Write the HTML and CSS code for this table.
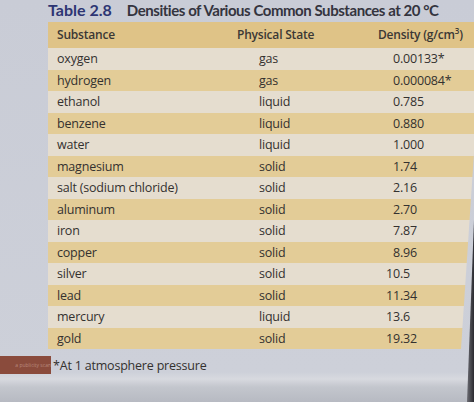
FILE: index.html
```html
<!DOCTYPE html>
<html>
<head>
<meta charset="utf-8">
<link rel="stylesheet" href="styles.css">
</head>
<body>
<div class="page">
  <h1 class="title"><span class="num">Table 2.8</span><span class="name">Densities of Various Common Substances at 20 °C</span></h1>
  <div class="tbl">
    <div class="row head"><div class="c1">Substance</div><div class="c2">Physical State</div><div class="c3">Density (g/cm<sup>3</sup>)</div></div>
    <div class="row"><div class="c1">oxygen</div><div class="c2">gas</div><div class="c3"><span class="i">0</span>.00133*</div></div>
    <div class="row"><div class="c1">hydrogen</div><div class="c2">gas</div><div class="c3"><span class="i">0</span>.000084*</div></div>
    <div class="row"><div class="c1">ethanol</div><div class="c2">liquid</div><div class="c3"><span class="i">0</span>.785</div></div>
    <div class="row"><div class="c1">benzene</div><div class="c2">liquid</div><div class="c3"><span class="i">0</span>.880</div></div>
    <div class="row"><div class="c1">water</div><div class="c2">liquid</div><div class="c3"><span class="i">1</span>.000</div></div>
    <div class="row"><div class="c1">magnesium</div><div class="c2">solid</div><div class="c3"><span class="i">1</span>.74</div></div>
    <div class="row"><div class="c1">salt (sodium chloride)</div><div class="c2">solid</div><div class="c3"><span class="i">2</span>.16</div></div>
    <div class="row"><div class="c1">aluminum</div><div class="c2">solid</div><div class="c3"><span class="i">2</span>.70</div></div>
    <div class="row"><div class="c1">iron</div><div class="c2">solid</div><div class="c3"><span class="i">7</span>.87</div></div>
    <div class="row"><div class="c1">copper</div><div class="c2">solid</div><div class="c3"><span class="i">8</span>.96</div></div>
    <div class="row"><div class="c1">silver</div><div class="c2">solid</div><div class="c3"><span class="i">10</span>.5</div></div>
    <div class="row"><div class="c1">lead</div><div class="c2">solid</div><div class="c3"><span class="i">11</span>.34</div></div>
    <div class="row"><div class="c1">mercury</div><div class="c2">liquid</div><div class="c3"><span class="i">13</span>.6</div></div>
    <div class="row"><div class="c1">gold</div><div class="c2">solid</div><div class="c3"><span class="i">19</span>.32</div></div>
  </div>
  <div class="foot">
    <span class="tag">a publicity scan</span>
    <span class="note">*At 1 atmosphere pressure</span>
  </div>
</div>
</body>
</html>
```
FILE: styles.css
```css
html, body {
  margin: 0;
  padding: 0;
}
body {
  position: relative;
  width: 474px;
  height: 402px;
  overflow: hidden;
  font-family: "Open Sans", "Noto Sans", sans-serif;
  color: #34312f;
  background: linear-gradient(to bottom, #c9ccd6 0, #cdd0d9 372px, #d7d9df 379px, #c3c6cd 387px, #b7bac2 402px);
}
body::after {
  content: "";
  position: absolute;
  top: 0;
  right: 0;
  width: 12px;
  height: 402px;
  background: linear-gradient(to right, #9a9ba2 0, #2a2a30 100%);
  clip-path: polygon(100% 220px, 100% 100%, 5px 100%);
}
.page {
  display: flex;
  flex-direction: column;
}
.title {
  margin: 0;
  padding: 0 0 0 48px;
  height: 22px;
  font-family: Lato, "Open Sans", sans-serif;
  font-size: 15px;
  line-height: 19px;
  font-weight: 700;
  white-space: nowrap;
}
.title .num {
  color: #2d3573;
  font-size: 16px;
  margin-right: 15px;
}
.title .name {
  color: #34343e;
  letter-spacing: -0.45px;
}
.tbl {
  margin-left: 48px;
  display: flex;
  flex-direction: column;
  font-size: 12.5px;
  letter-spacing: -0.2px;
  clip-path: polygon(0 0, 100% 0, 100% 40%, calc(100% - 13px) 100%, 0 100%);
}
.row {
  display: grid;
  grid-template-columns: 180px 142px 1fr;
  align-items: center;
  height: 22px;
  line-height: 14px;
}
.row:nth-child(even) { background: #e5ddcf; }
.row:nth-child(odd) { background: #e3cc97; height: 21px; }
.row.head {
  height: 26px;
  background: #dfc387;
  font-weight: 600;
  font-size: 12px;
  color: #3b3835;
}
.c1 { padding-left: 9px; white-space: nowrap; }
.c2 { padding-left: 31px; }
.head .c2 { padding-left: 9px; }
.c3 { white-space: nowrap; }
.head .c3 { padding-left: 8px; }
.c3 .i {
  display: inline-block;
  width: 30px;
  text-align: right;
}
sup {
  font-size: 8px;
  line-height: 0;
}
.foot {
  display: flex;
  align-items: center;
  margin-top: 7px;
  height: 18px;
}
.tag {
  width: 51px;
  height: 18px;
  background: #8a4b3c;
  color: #b88a7c;
  font-size: 5px;
  line-height: 18px;
  overflow: hidden;
  white-space: nowrap;
  text-align: right;
}
.note {
  padding-left: 2px;
  font-size: 12.5px;
  color: #34312f;
  letter-spacing: -0.2px;
}
```
